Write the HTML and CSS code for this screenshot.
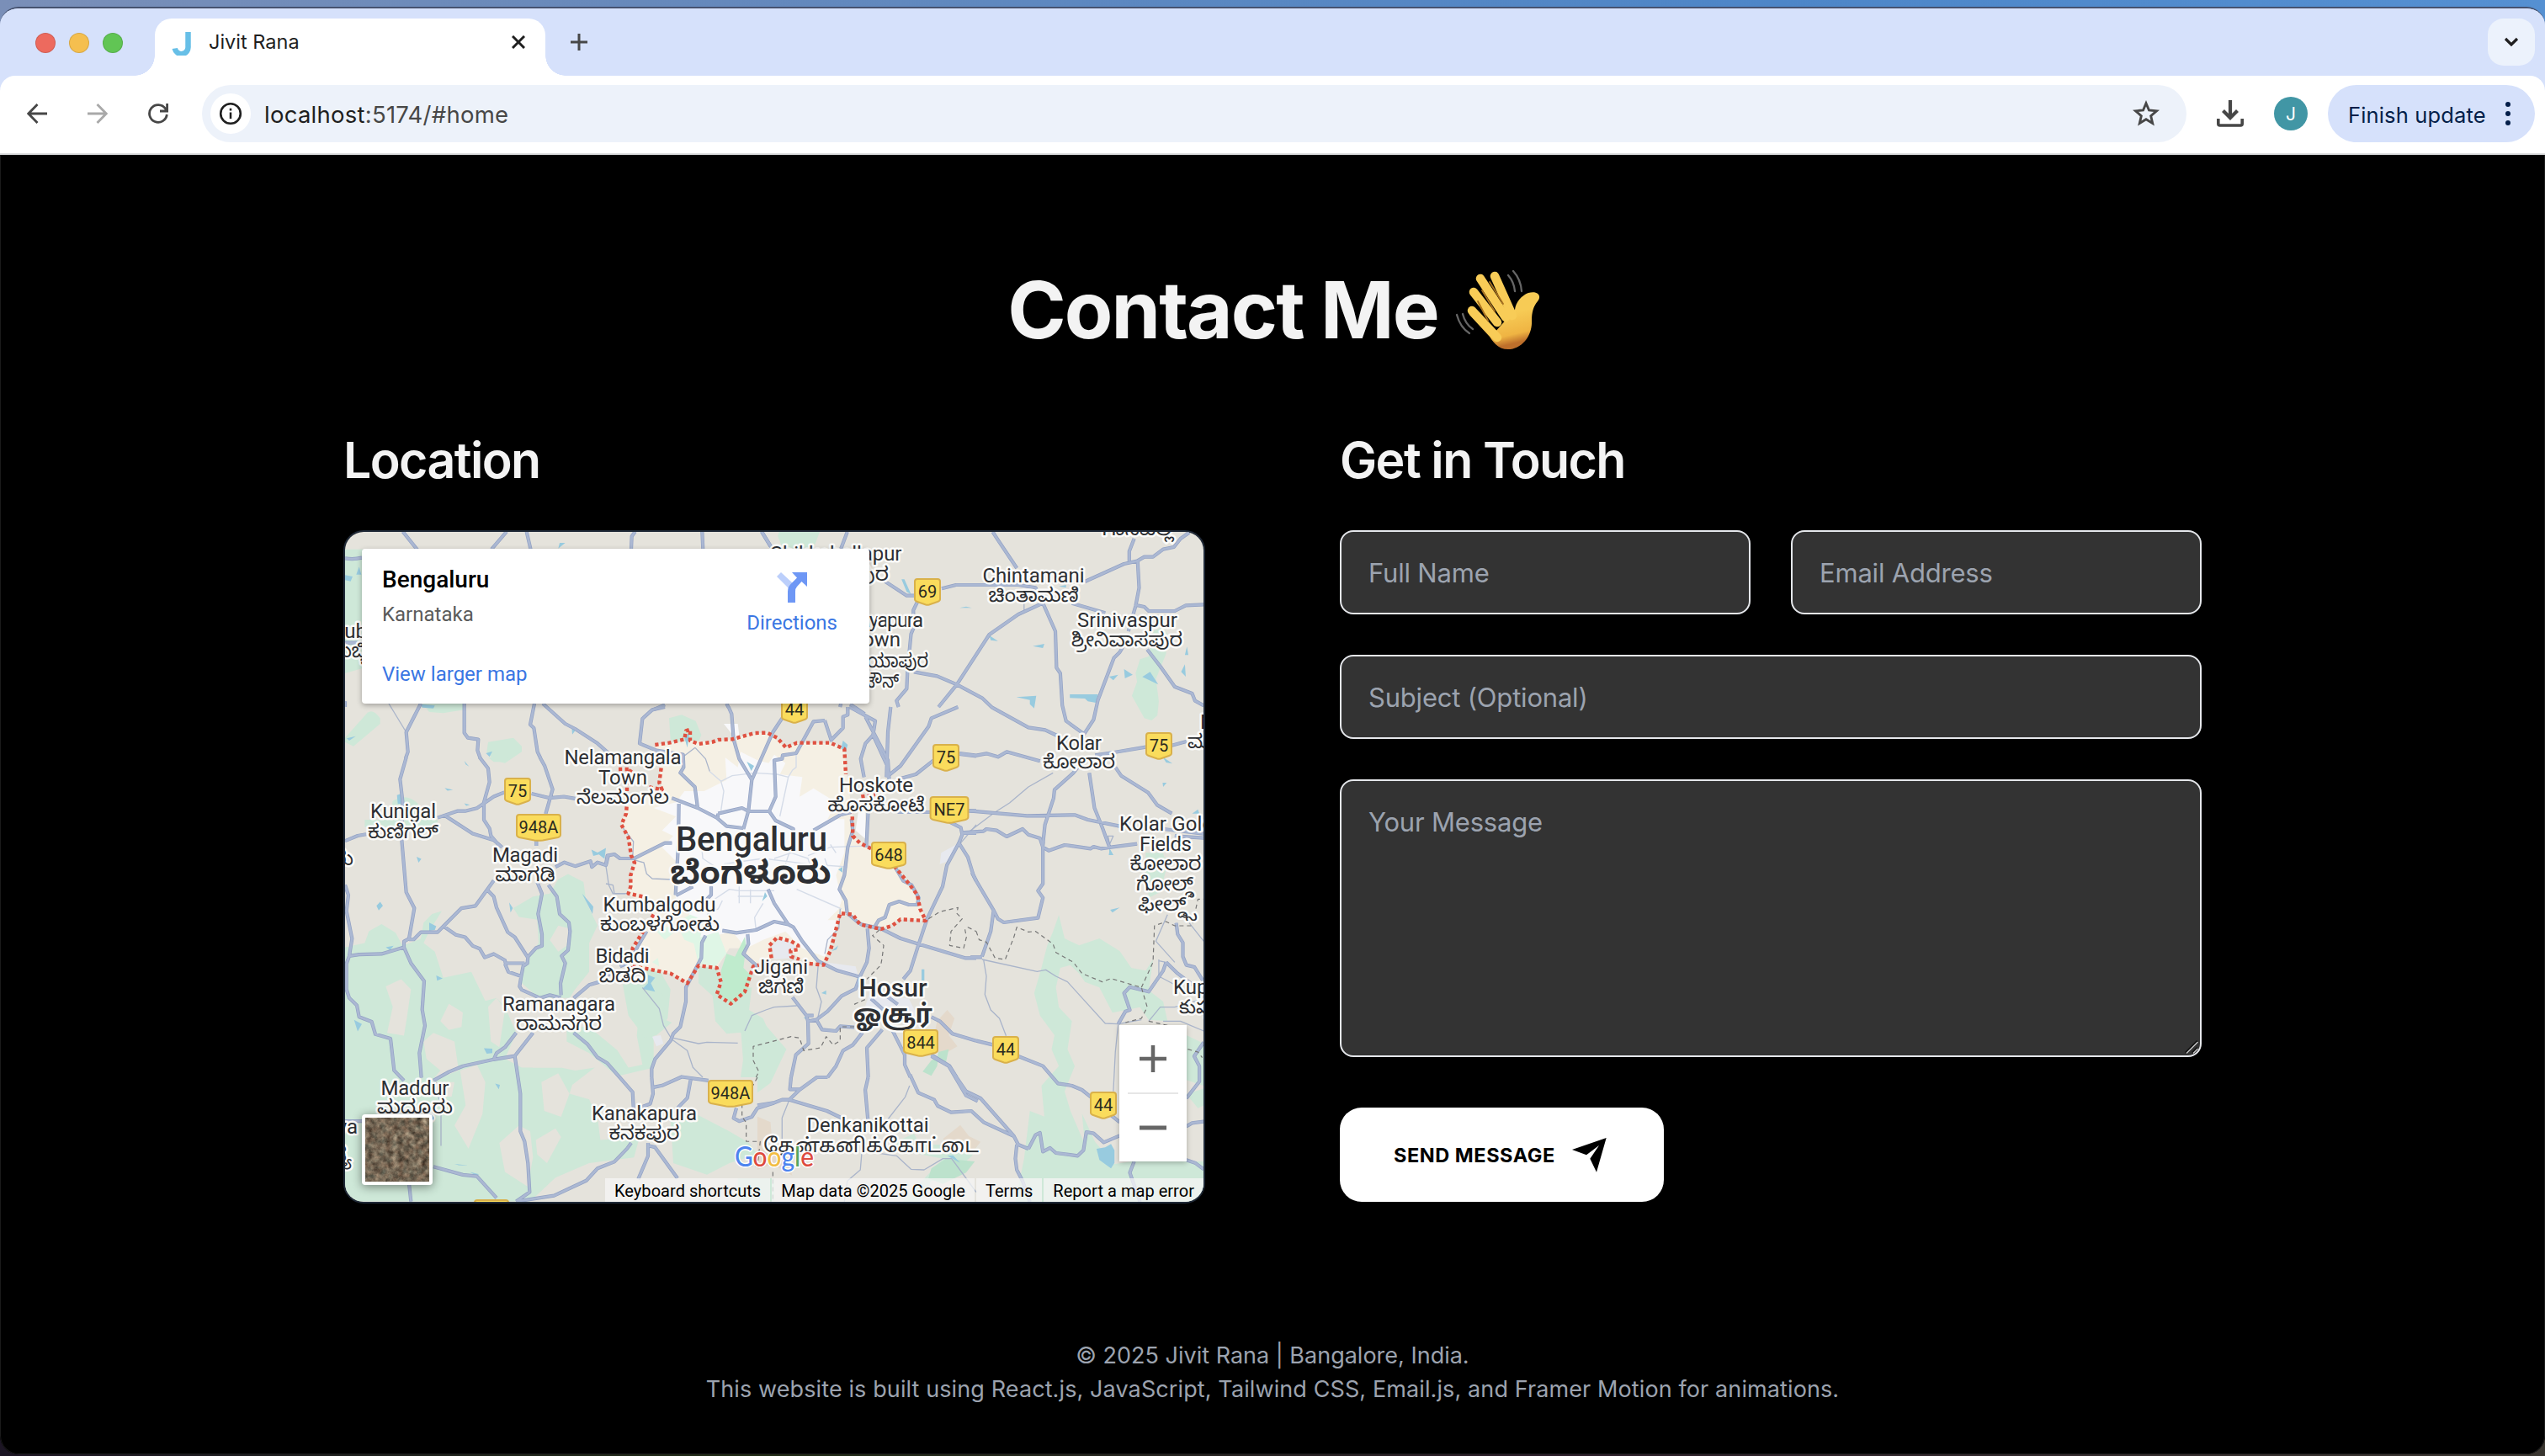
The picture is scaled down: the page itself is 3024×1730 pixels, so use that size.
FILE: index.html
```html
<!DOCTYPE html>
<html lang="en">
<head>
<meta charset="utf-8">
<title>Jivit Rana</title>
<link rel="stylesheet" href="styles.css">
</head>
<body>
<div class="window">
  <header class="tabstrip">
    <div class="lights"><i class="red"></i><i class="amber"></i><i class="lime"></i></div>
    <div class="tab">
      <svg class="favicon" width="24" height="28" viewBox="0 0 24 28"><path d="M19.500 0V17a8 8.300 0 0 1-15.800 2.500" fill="none" stroke="#67bfe7" stroke-width="6.500"/></svg>
      <span class="tab-title">Jivit Rana</span>
      <svg width="16" height="16" viewBox="0 0 16 16"><path d="M1 1L15 15M15 1L1 15" stroke="#1f1f1f" stroke-width="3"/></svg>
    </div>
    <svg class="plus" width="20" height="20" viewBox="0 0 20 20"><path d="M10 0V20M0 10H20" stroke="#474747" stroke-width="3"/></svg>
    <div class="tabsearch"><svg width="18" height="12" viewBox="0 0 18 12"><path d="M2 2L9 9L16 2" fill="none" stroke="#1f1f1f" stroke-width="3.200"/></svg></div>
  </header>
  <nav class="toolbar">
    <svg class="nav" width="24" height="24" viewBox="0 0 24 24"><path d="M24 12H2M12.500 1L1.800 12L12.500 23" fill="none" stroke="#474747" stroke-width="2.800"/></svg>
    <svg class="nav" width="24" height="24" viewBox="0 0 24 24"><path d="M0 12H22M11.500 1L22.200 12L11.500 23" fill="none" stroke="#a9a9a9" stroke-width="2.800"/></svg>
    <svg class="nav" width="24" height="24" viewBox="0 0 24 24"><path d="M22.300 13A10.400 10.400 0 1 1 20.500 6L22 8.500M22.600 0V9H14" fill="none" stroke="#474747" stroke-width="2.800"/></svg>
    <div class="omnibox">
      <span class="info"><svg width="28" height="28" viewBox="0 0 28 28"><circle cx="14" cy="14" r="11.800" fill="none" stroke="#1f1f1f" stroke-width="2.600"/><path d="M14 12.500V20M14 7.800V10.400" stroke="#1f1f1f" stroke-width="2.500"/></svg></span>
      <span class="url">localhost<em>:5174/#home</em></span>
      <svg width="32" height="32" viewBox="0 0 32 32"><path d="M16 3.800L19.500 12L28.500 12.800L21.700 18.700L23.700 27.500L16 22.800L8.300 27.500L10.300 18.700L3.500 12.800L12.500 12Z" fill="none" stroke="#474747" stroke-width="2.900"/></svg>
    </div>
    <svg class="download" width="32" height="32" viewBox="0 0 32 32"><path d="M16 0V20M7.500 12.500L16 21L24.500 12.500" fill="none" stroke="#474747" stroke-width="4.200"/><path d="M1.800 22V28Q1.800 30 3.800 30H28.200Q30.200 30 30.200 28V22" fill="none" stroke="#474747" stroke-width="3.600"/></svg>
    <span class="avatar">J</span>
    <div class="update"><span>Finish update</span><svg width="6" height="30" viewBox="0 0 6 30"><g fill="#041e49"><circle cx="3" cy="4" r="3"/><circle cx="3" cy="15" r="3"/><circle cx="3" cy="26" r="3"/></g></svg></div>
  </nav>

  <main class="page">
    <h1 class="title"><span>Contact Me</span>
      <svg class="wave" width="104" height="96" viewBox="0 0 104 96">
        <defs><linearGradient id="skin" x1="0" y1="0" x2=".3" y2="1"><stop offset=".5" stop-color="#f7cb55"/><stop offset=".85" stop-color="#efb443"/><stop offset="1" stop-color="#bd6f2b"/></linearGradient></defs>
        <path d="M20 46L47 74L71 47C72 38 79 30 87 27C99 24 103 31 98 37C93 43 91 50 91 60C92 78 79 94 63 94C52 94 46 87 41 79L17 53Q14 46 20 46Z" fill="url(#skin)"/>
        <g fill="none" stroke="#f8cc57" stroke-linecap="round" stroke-width="10.500"><path d="M20 48L50 80"/><path d="M22 26L50 62"/><path d="M30 10L60 56"/><path d="M47 7L68 54"/></g>
        <g fill="none" stroke="#a8711f" stroke-linecap="round" stroke-width="1.800"><path d="M27 37L39 60"/><path d="M32 24L47 49"/><path d="M41 14L57 40"/></g>
        <g fill="none" stroke="#666" stroke-linecap="round" stroke-width="2.300"><path d="M2 53Q6 68 17 75"/><path d="M9 52Q12 64 21 70"/><path d="M63 6Q70 14 71 25"/><path d="M69 1Q78 11 79 25"/></g>
      </svg>
    </h1>
    <div class="columns">
      <section>
        <h2>Location</h2>
        <div class="map">
          <svg class="tiles" width="1020" height="796" viewBox="410 632 1020 796">
            <defs>
              <g id="roads">
                <g transform="translate(400 500) scale(.33333)">
                  <path d="M236 395L288 460M606 395L552 458M677 395L692 460M1064 395L1052 412L1050 458M1303 395L1306 460M1515 395L1545 445L1560 460M30 490Q60 495 90 488M30 791H90M300 1008L248 1110L254 1180L246 1203M455 1008V1112L468 1130L505 1136L502 1175L512 1203M705 1008L690 1083L703 1095L716 1180L727 1203M735 1008L815 1080L850 1098L930 1150L975 1190M1170 1012L1128 1030M1390 1008L1397 1022M30 1000V1020"/>
                </g>
                <g transform="translate(900 620) scale(.34435 .33333)">
                  <path d="M812 36L830 65L895 165M1300 60L1283 105V140M1490 38L1460 60L1437 90L1400 98L1365 125H1335L1310 140L1265 150L1130 213M1312 142L1317 235L1305 300L1280 390M1308 297L1335 303L1350 318H1440L1478 298L1540 295M636 238L685 225H900L960 235L985 290M440 212L515 263H545M552 285L538 315V380L530 400L518 530L515 595L480 638L487 660M310 36L288 96M15 36L45 85M985 290L900 330L800 402L688 580L625 660M985 290L1028 390L1032 520L1045 540L1052 655L1065 710L1125 755M540 535L620 550L688 580L775 628L810 662L935 733L993 742L1040 765M1270 430L1250 465L1230 485L1175 635L1160 705L1125 760M1345 455L1390 515L1440 588L1500 612L1510 638L1540 655M1085 290L1200 325M697 825L755 833L790 826L830 838L860 820L975 853M1165 832L1230 822L1340 803M1430 797L1480 783M1125 850L1090 895L1025 955L1022 985L992 1080L985 1150M1145 895L1163 1020L1190 1090L1215 1160M1235 875L1255 905L1348 965L1380 1010L1430 1040M730 1030L930 1048L1095 1045L1140 1062L1250 1085M1400 1095L1540 1112M1440 1120L1540 1127M705 1108L780 1103L790 1095L825 1100L860 1122L915 1095L935 1115L975 1128L985 1160L1005 1172L1060 1152L1150 1165L1160 1158L1185 1165L1220 1160L1310 1148M288 648L285 660M320 650L370 685"/>
                </g>
                <g transform="translate(720 840) scale(.33333)">
                  <path d="M210 0L165 10L130 42L120 130L180 155L275 170L277 215L265 235L317 285L327 360M437 0L448 25L455 115L475 185L520 260M628 40L595 90L520 260L508 370L490 435M235 325L327 360L395 395L430 425L490 432M400 380L485 360L508 372H582L605 405L668 435V460M398 397L400 380M780 48L740 52L678 165L630 172L628 185L600 190L605 320L582 372M780 48L803 118L845 75V35L862 28V0M868 0L960 50L952 100L1005 215M925 35L1005 190L1010 260M952 100L925 130L908 185L920 250M1015 0L1005 90L1000 250M1255 0L1160 40L1150 70L1050 210L1000 250M1168 190L1105 240L1050 255M1260 168L1320 175M260 345L258 490L248 670M235 485H210L100 540H50L30 525L5 530L0 560M740 440L835 385L875 375M935 370L928 500M875 400L880 440L862 500L850 600L832 650L855 690L860 735M860 735L895 765L910 775L980 790L1050 825L1115 845L1280 895H1320M960 780L972 760L995 750L1010 705L1045 693L1080 705H1112M1268 450H1320M1225 410L1265 430L1270 455L1258 485L1215 565L1200 640L1145 755L1115 845L1085 940L1060 970M1258 485L1290 535L1310 600L1320 620M1040 375H1155M1293 370H1320M578 650L600 700L650 775L668 785L700 835L755 905L825 940L905 962M415 797L465 805L535 795L600 765L650 775M505 810L508 845L490 880L540 925M375 640V670L345 700M250 672L310 640M145 800L115 850L85 910L50 925M355 815L342 840L340 895L285 1000V1050L265 1140L240 1165L230 1190L175 1255L163 1290V1320M932 790L938 860L930 910L905 962L890 1005L840 1030L790 1085L750 1115L720 1120L715 1100L740 1100M665 1035L715 1100M720 1120L722 1200L677 1240L660 1320M750 1115L770 1150L820 1155L835 1138L885 1142M915 1160L880 1205L845 1225L820 1280L790 1320M985 1150L930 1215L935 1320M1020 1150L1065 1240V1275L1085 1320M1160 1105L1190 1120L1235 1165L1320 1190M1160 1240L1225 1280L1250 1320M945 1040L990 1080M1000 1030L1040 1060M1030 570L1060 620L1090 635L1115 680L1110 705"/>
                </g>
                <g transform="translate(900 1000) scale(.34435 .33333)">
                  <path d="M740 110L755 140L815 245L830 275L850 288L968 272L985 200L968 175L985 150V0M815 245L805 320L775 410M735 412L775 412M755 710L815 725M900 765L985 800L1037 862L1085 870L1120 885L1150 910M1220 975L1250 1000M600 765L660 800L720 890L770 915L885 1050L900 1080L935 1095M660 800L720 905L760 925M526 830L555 895L610 920L622 942L668 965L738 960L780 1000L885 1050M382 840L372 885L382 1000M242 840L205 840L145 885L110 920L85 920L60 930L0 940M116 840L112 883H145M110 920L240 960L300 990M895 1080L890 1130L895 1170L915 1210L940 1284M935 1095L960 1045L975 1038L985 1105L1010 1092L1030 1110L1105 1120L1125 1100L1135 1035L1160 1040L1195 1072L1250 1048M1480 1015L1500 1003L1540 998M1480 1135L1510 1145L1540 1168M1300 1140L1285 1180L1320 1284M1480 915L1525 855V800L1507 765L1540 715M1410 430L1400 460L1350 535L1285 518L1265 540L1285 600L1270 605L1245 650M1410 430L1450 470L1540 540M1445 290L1450 330L1468 360V410L1480 440L1508 447L1540 500"/>
                </g>
                <g transform="translate(400 900) scale(.33333 .34435)">
                  <path d="M248 0L226 75L235 150L232 285L248 465L277 520L258 625L240 635V655L265 710L312 772L305 870L315 925L295 1020L302 1105M30 288L75 270L105 265M360 208L430 185H458L500 175L560 135L598 120M385 200L485 263L560 285L590 310M510 0L540 38L545 85L525 155V215L545 245L550 270L580 305M725 0L742 30L770 110L745 195M695 125L760 140L810 135L850 142M712 285V305M780 378L812 362L850 375L905 358L910 378L930 362L960 372L968 340M560 425L495 512L445 520L380 583L360 603H300L275 628H258M535 455L560 480L570 518L610 603L635 620L680 688M385 585L425 612L458 620L485 650L510 660L528 690L560 678L600 700L602 710H670M600 712L612 740L658 755M715 430L732 470L718 540L732 610V650L710 658L682 688L680 710L665 720L658 755L652 790L660 802L725 830L760 820L800 830M755 440L785 480L795 540L828 570L832 600L825 665L802 685L815 710L798 780L800 820M30 440L42 475L35 530L55 625L45 685L35 712V800L45 830L72 855L80 895L125 912L138 955L192 970L205 1080L240 1115M45 685L80 680L160 678L240 655M345 1115L400 1085L450 1065L560 1042L635 1030M560 1042L570 1020L600 1000L640 950M700 950L635 1030L655 1160V1290L670 1325L682 1400L688 1500L640 1532M845 830L900 785L935 775L990 735M845 950L895 990L930 1035L965 1055L1055 1155L1060 1240M1123 1104L1128 1160L1118 1195L1090 1205M1130 1138L1160 1132L1230 1102L1325 1115M1262 1112L1250 1175L1215 1210M1050 1330L1035 1350L990 1395L930 1418L890 1460L775 1512L640 1532M1110 1330V1375L1075 1455M1115 1340L1135 1345L1215 1452M345 1412L450 1440L500 1445L570 1520M258 1470L265 1532M30 1255H90M1425 1210L1415 1245L1435 1255L1480 1240L1500 1210L1560 1192"/>
                </g>
              </g>
              <path id="shield-2" class="shield" d="M-12-15H12Q15-15 15-12V9Q15 11 12 12L2 15.500Q0 16-2 15.500L-12 12Q-15 11-15 9V-12Q-15-15-12-15Z"/>
              <path id="shield-3" class="shield" d="M-17-15H17Q20-15 20-12V9Q20 11 17 12L3 15.500Q0 16-3 15.500L-17 12Q-20 11-20 9V-12Q-20-15-17-15Z"/>
              <path id="shield-4" class="shield" d="M-23-15H23Q26-15 26-12V9Q26 11 23 12L5 15.500Q0 16-5 15.500L-23 12Q-26 11-26 9V-12Q-26-15-23-15Z"/>
            </defs>
            <rect x="410" y="632" width="1020" height="796" fill="#e5e3dc"/>
            <g class="green">
              <g transform="translate(400 500) scale(.33333)">
                <path d="M30 458H100V880L30 900ZM30 1130L110 1040Q130 1025 155 1060V1080L60 1160L30 1145ZM300 1000H455V1030L380 1042L330 1038ZM540 1145L630 1130L660 1160V1180L600 1220L560 1210L535 1180Z"/>
              </g>
              <g transform="translate(900 620) scale(.34435 .33333)">
                <path d="M75 36H215L195 90L130 110L85 90L70 50ZM1365 390L1400 375L1415 400L1410 470L1375 560L1385 640L1380 690L1360 708L1335 700L1292 620L1310 570L1305 540L1320 490L1350 480Z"/>
                <path d="M1340 1180L1400 1180L1410 1230L1390 1290L1340 1310Z"/>
              </g>
              <g transform="translate(400 900) scale(.33333 .34435)">
                <path d="M30 655L100 640L115 600L160 575L210 605L235 650L300 625L310 570L340 540L375 530L330 600L310 640L350 670L380 760L480 740L530 840L570 830L600 860L640 950L600 1040L660 1070L720 1070L800 1070L850 1080L920 1070L840 1130L830 1160L900 1180L930 1240L940 1320L1080 1310L1060 1380L900 1400L780 1450L690 1532H30Z"/>
                <path d="M630 520L700 480L760 470L790 420L825 402L880 430L890 500L930 580L900 640L900 740L850 800L830 830L720 830L650 770L680 690L720 640L715 560L650 550Z"/>
                <path d="M820 930L900 930L1000 1010L1040 1070L1090 1060L1070 960L1080 860L1030 830V770L1080 760L1130 700L1190 800L1180 900L1130 960V1070L1000 1100L900 1020L820 980Z"/>
                <path d="M1190 1240L1260 1220L1400 1290L1470 1330L1500 1370L1400 1400L1320 1440L1200 1400ZM1440 930L1500 910L1560 960V1080L1510 1120L1450 1060ZM200 150Q250 120 290 160L300 200L230 230L190 200ZM100 215H360V240H100ZM540 0H610L600 15H560ZM1430 1452H1560V1532H1430Z"/>
              </g>
              <g transform="translate(720 840) scale(.33333)">
                <path d="M225 40L270 28L320 50L340 100L330 125L290 160L230 115ZM330 930L350 925L400 940L420 1010L520 1000L510 1080L560 1110L590 1180L640 1220L590 1320H480L500 1180L480 1160L430 1165L390 1120L380 1030L330 985ZM60 990L140 960L215 1040L200 1110L235 1125L180 1170L140 1180L80 1100Z"/>
              </g>
              <g transform="translate(900 1000) scale(.34435 .33333)">
                <path d="M1040 262L1060 345L1110 370L1180 345L1250 390L1290 450L1340 460L1365 420L1350 530L1400 570L1415 640L1350 635L1320 590L1225 610L1180 520L1130 500L1110 470L1080 440L1045 450L1030 520L1040 590L1085 640L1070 740L1095 800L1060 890L1080 960L1130 1080L1120 970L1165 1070L1230 1150L1290 1140L1540 1140V1284H890L920 1130L940 960L990 980L980 870L1040 800L1015 740L1025 690L975 620L955 540L980 450L1000 370L1020 320Z"/>
                <path d="M0 620L100 740L45 860L0 895ZM1480 690L1540 720V870L1480 850ZM1340 40L1420 60L1390 180L1350 200ZM440 1090L540 1040L560 1080H640L680 1060L760 1080L740 1120L660 1200L600 1210L560 1284H500L640 1130ZM1480 900L1540 880V940L1520 950Z"/>
              </g>
            </g>
            <g class="land">
              <g transform="translate(400 900) scale(.33333 .34435)">
                <path d="M175 790L230 765L265 800L250 900L240 960L180 950L200 860ZM310 980L345 950L420 980L435 1080L340 1115L370 1080L320 1040ZM370 910L400 850L450 880L445 930L400 940ZM440 1080L500 1060L530 1120L520 1230L470 1350L420 1270L460 1200ZM580 1330L650 1270L690 1290L700 1380L680 1480L600 1430ZM710 1320L780 1280L800 1310L750 1400L715 1370ZM760 630L790 580L830 590L820 650L790 670ZM540 860L570 830L600 870L580 1000L550 980ZM660 950L780 950L820 1020L800 1070H700L660 1030ZM730 1120L790 1090L830 1160L800 1240L740 1220ZM330 1120L420 1120L410 1170L340 1170ZM30 650L45 640V655Z"/>
              </g>
            </g>
            <g transform="translate(720 840) scale(.33333)">
              <path fill="#f5f0e4" d="M175 135L225 128L300 120L380 125L450 115L530 93L575 92L642 145L680 128H800L850 150L860 250L878 380L880 460L945 505L1030 570L1080 630L1110 670L1140 762L1050 757L980 792L905 775L880 740L835 735L775 920L690 900L658 868L610 822L583 850L590 900L525 925L490 860L440 860L395 930L330 922L290 985L230 950L155 935L95 920L95 860L170 740L80 665L102 555L80 465L55 420L75 340L200 295L190 200Z"/>
              <path fill="#f8f8fa" d="M350 300L430 260L425 180L470 215L480 160L540 190L580 200L600 170L640 200L620 240L700 250L690 320L740 290L820 340L790 400L850 400V520L820 600L840 690L830 720L790 760L830 760L780 890L700 860L640 800L560 830L500 860L450 800L330 830L290 780L300 720L250 690L240 620L260 560L200 500L240 460L200 440L250 390L170 360L250 340L280 300ZM420 60L470 60L475 100L460 110ZM900 370H925V470L890 440Z"/>
              <path fill="#e7e9ef" d="M590 850L620 828L665 840L680 860L655 870L660 895L600 900ZM780 910L890 925L900 960L820 935ZM940 1020L1080 1040L1110 1100L1000 1140L920 1080ZM165 1175L195 1170L205 1200L180 1210ZM1250 490L1195 520L1190 560L1220 550Z"/>
              <path fill="#dff6e6" d="M180 800L230 780L300 740L350 760L330 850L280 830L260 790L210 830ZM310 830L400 800L430 880L390 925L330 915ZM165 910L185 895L190 925Z"/>
              <path fill="#bfebcd" d="M430 880L460 890L495 820L500 850L490 930L520 960L500 1020L445 1058L400 1020L415 990L410 940Z"/>
            </g>
            <g class="sand" transform="translate(900 1000) scale(.34435 .33333)"><path d="M620 640L655 600L680 630L660 690L690 730L640 760L600 740ZM640 1060L700 1010L730 1050L770 1070L740 1110L680 1090ZM0 980L45 1000L50 1060L90 1080L120 1190L50 1150L0 1170Z"/></g>
            <g fill="#bce2cc" transform="translate(900 1000) scale(.34435 .33333)"><path d="M570 820L600 780L625 765L620 800L600 835ZM625 750L660 740L650 790L620 770ZM600 1165L650 1130L750 1140L720 1180L640 1220L590 1200Z"/></g>
            <g class="water">
              <g transform="translate(400 500) scale(.33333)"><path d="M790 455L795 435L815 435ZM30 550L57 555L50 572L30 568ZM70 548L80 520L88 548ZM300 1010L350 1015L345 1025L305 1022ZM36 1132L68 1124L45 1140ZM532 1185L555 1178L545 1198ZM455 1212L472 1232L460 1225ZM838 1090L850 1105L840 1118Z"/></g>
              <g transform="translate(900 620) scale(.34435 .33333)"><path d="M497 205L507 205L530 258L515 250ZM697 307L720 302L740 307ZM800 405L830 425L805 422ZM950 443L990 435L985 450ZM893 625L962 620L955 665L940 650V635ZM1078 615H1175L1168 645L1140 640L1130 630L1078 628ZM1265 525L1295 545L1268 558ZM1328 553L1355 535L1383 580ZM1475 475L1482 445L1487 475ZM1462 535L1475 508L1478 552ZM1213 552L1245 545L1228 565ZM1398 838L1432 862L1410 858ZM1398 930H1412L1400 945ZM1500 1040L1520 1025L1525 1040ZM1215 1165L1228 1188H1213ZM1040 230L1065 225V235Z"/></g>
              <g transform="translate(720 840) scale(.33333)"><path d="M845 120L862 135L855 158L838 148ZM502 195L528 210L518 228ZM567 660L575 675L557 692ZM828 580L843 570V590ZM805 870L828 850L822 865ZM150 955L175 965L160 985L175 1015L130 1005L150 985ZM768 1020L785 1010V1025ZM280 110L298 90L290 145ZM1125 935H1135V975H1125ZM705 1108L722 1100L715 1115Z"/></g>
              <g transform="translate(900 1000) scale(.34435 .33333)"><path d="M1170 1095L1200 1090L1220 1078L1232 1100V1145L1220 1165L1180 1135ZM1217 243L1250 235L1225 253ZM655 1120L675 1118L700 1145ZM1215 25L1228 48H1213Z"/></g>
              <g transform="translate(400 900) scale(.33333 .34435)"><path d="M215 130L230 125V150L240 160L218 160ZM285 343L302 350L292 363ZM142 512L155 498L165 512L150 528ZM330 570L355 582L350 595L330 598ZM455 158L475 163L462 167ZM385 105L415 112L395 115ZM908 318L930 328L960 312L955 350L935 335L915 340ZM875 470L915 515L912 540ZM615 500L628 520L620 535ZM175 655L203 650L190 665ZM355 752L378 762L358 770ZM62 905L90 920L75 945ZM525 1003L555 1005V1020L535 1022ZM565 1125L582 1130L578 1145ZM420 1403L470 1408L435 1407ZM475 1430L508 1438L495 1442Z"/></g>
            </g>
            <g class="minor">
              <path transform="translate(720 840) scale(.33333)" d="M318 145L355 185L370 230M272 180L318 145M100 545L135 555L145 595L165 612L235 615M0 630L25 635L30 665H80M130 1000L190 1075L205 1135L235 1185L290 1225L310 1285L345 1320M240 1180L330 1200L360 1195L470 1198M495 1155L520 1100L570 1080L600 1070L680 1065M757 915L750 1000L768 1050L755 1110M780 880L790 830L830 790L835 720M60 430L98 480L95 540M1260 490L1320 420"/>
              <path transform="translate(900 620) scale(.34435 .33333)" d="M730 1105L820 1035L870 1002L935 945L1020 895M920 240V320M1210 1120H1228L1215 1150Z"/>
              <path transform="translate(900 1000) scale(.34435 .33333)" d="M775 420L965 463L995 457L1030 480L1070 500L1200 648L1245 650L1325 635M780 420L790 480L785 545L805 600L835 630L858 692M1245 650L1235 750L1228 890M1415 260L1375 355L1440 430M1350 640L1390 590L1440 590L1540 560M1385 420V480L1440 510M1385 425L1410 430M1400 640H1460L1540 675M1490 290L1540 355M525 870L510 910L450 990M110 920L85 985V1060M380 1105L480 1120L530 1168L575 1170L640 1130H670L720 1200L755 1250M360 1110L355 1170L310 1210L300 1284"/>
              <path transform="translate(400 500) scale(.33333)" d="M186 1008L248 1110"/>
              <path transform="translate(400 900) scale(.33333 .34435)" d="M372 1215V1340M355 1120L365 1180M960 375L970 440L985 470H1030"/>
            </g>
            <path class="street" transform="translate(720 840) scale(.33333)" d="M370 230L410 265L420 300L410 370M410 265L450 245L530 235L610 240L650 250L620 390M650 250L665 225L678 215V165M680 650L840 720M420 560L560 540L720 560L860 570M470 655H600M470 675H560M475 640V700M515 650V700M380 690L440 650L475 655M360 740L400 720L415 690M340 480L345 540L390 570M300 700L350 690M720 530L800 500L940 495M780 540L790 570M800 490L820 520M660 500L640 560M560 700L530 750L535 795M600 540L660 520L720 540L740 600"/>
            <use href="#roads" class="road-edge"/>
            <use href="#roads" class="road"/>
            <g class="border">
              <path transform="translate(720 840) scale(.33333)" d="M1150 755L1190 730L1255 715L1250 735L1270 755L1230 800L1225 850L1275 860L1285 820L1280 795L1290 785L1320 800M975 795L950 815L990 850L985 890L980 920L930 970M885 1060L930 1040M885 1140L835 1140V1190L810 1205L785 1175L765 1215L705 1225L690 1180L660 1175L525 1210L525 1260L545 1300L535 1320"/>
              <path transform="translate(900 1000) scale(.34435 .33333)" d="M755 320L765 350L790 358L820 415L855 420L885 340L895 305L935 322L960 320L1020 365L1030 395L1090 430L1120 470L1190 500L1220 488L1325 520L1345 590L1325 630L1270 645M1325 520L1365 430L1370 300L1410 285L1440 300H1500L1520 205H1540M1350 640L1415 655M1485 740L1520 750L1535 770"/>
              <path transform="translate(400 900) scale(.33333 .34435)" d="M1500 1104L1445 1200V1240L1460 1260V1325H1510L1500 1410L1480 1410M1555 1430V1532"/>
            </g>
            <path class="limits" transform="translate(720 840) scale(.33333)" d="M175 135L225 128L280 115L285 85L300 80V120L330 132L380 125L400 117L450 115L530 93L575 92L610 110L642 145L680 128H800L850 150L855 240M200 195L190 270L200 295L150 285M45 222L90 222L75 250V340L72 380L55 420L80 465L90 530L102 555L88 600V640L80 665L150 680M170 740L120 820L95 860V925L155 935L230 950L290 985L330 922L395 930L410 980L395 1025L445 1058L495 1015L525 925L545 920M590 895L583 850L610 822L660 835L685 850V865L658 868L660 890L690 900M725 915L775 920L800 870L835 735L880 740L905 775L980 792L1020 780L1050 757L1140 762L1120 720L1110 670L1080 630L1030 570M945 505L905 485L880 460L878 380M910 320L960 312"/>

            <g class="place">
              <text x="993" y="666" textLength="157">Chikkaballapur</text><text class="in" x="990" y="690" textLength="132" lengthAdjust="spacingAndGlyphs">ಚಿಕ್ಕಬಳ್ಳಾಪುರ</text>
              <text x="1048" y="745" textLength="98">Vijayapura</text><text x="1041" y="768" textLength="58">Town</text><text class="in" x="1050" y="793" textLength="106" lengthAdjust="spacingAndGlyphs">ವಿಜಯಾಪುರ</text><text class="in" x="1046" y="817" textLength="44" lengthAdjust="spacingAndGlyphs">ಟೌನ್</text>
              <text x="1228" y="691.700" textLength="121">Chintamani</text><text class="in" x="1228" y="715" textLength="107" lengthAdjust="spacingAndGlyphs">ಚಿಂತಾಮಣಿ</text>
              <text x="1339.400" y="744.500" textLength="119">Srinivaspur</text><text class="in" x="1339" y="768" textLength="132" lengthAdjust="spacingAndGlyphs">ಶ್ರೀನಿವಾಸಪುರ</text>
              <text class="in" x="1352" y="636" textLength="84" lengthAdjust="spacingAndGlyphs">ಗಾನಪಲ್ಲಿ</text>
              <text x="1282" y="890.500" textLength="54">Kolar</text><text class="in" x="1282" y="913" textLength="86" lengthAdjust="spacingAndGlyphs">ಕೋಲಾರ</text>
              <text x="1041" y="941" textLength="88">Hoskote</text><text class="in" x="1041" y="964" textLength="115" lengthAdjust="spacingAndGlyphs">ಹೊಸಕೋಟೆ</text>
              <text x="1386" y="987" textLength="112">Kolar Gold</text><text x="1385" y="1011" textLength="62">Fields</text><text class="in" x="1385" y="1034" textLength="85" lengthAdjust="spacingAndGlyphs">ಕೋಲಾರ</text><text class="in" x="1384" y="1058" textLength="68" lengthAdjust="spacingAndGlyphs">ಗೋಲ್ಡ್</text><text class="in" x="1386" y="1082" textLength="68" lengthAdjust="spacingAndGlyphs">ಫೀಲ್ಡ್ಸ್</text>
              <text class="in start" x="1411" y="889">ಮುಳಬಾಗಿಲು</text><text class="start" x="1426" y="866">Mulbagal</text>
              <text x="740" y="907.500" textLength="139">Nelamangala</text><text x="740" y="932" textLength="58">Town</text><text class="in" x="740" y="955" textLength="110" lengthAdjust="spacingAndGlyphs">ನೆಲಮಂಗಲ</text>
              <text x="479" y="972" textLength="78">Kunigal</text><text class="in" x="479" y="996" textLength="84" lengthAdjust="spacingAndGlyphs">ಕುಣಿಗಲ್</text>
              <text x="624" y="1023.500" textLength="78">Magadi</text><text class="in" x="624" y="1047" textLength="71" lengthAdjust="spacingAndGlyphs">ಮಾಗಡಿ</text>
              <text x="783.500" y="1082.500" textLength="134">Kumbalgodu</text><text class="in" x="784" y="1106" textLength="142" lengthAdjust="spacingAndGlyphs">ಕುಂಬಳಗೋಡು</text>
              <text x="739.500" y="1143.500" textLength="64">Bidadi</text><text class="in" x="739.500" y="1167" textLength="56" lengthAdjust="spacingAndGlyphs">ಬಿಡದಿ</text>
              <text x="664" y="1201" textLength="134">Ramanagara</text><text class="in" x="664" y="1224" textLength="102" lengthAdjust="spacingAndGlyphs">ರಾಮನಗರ</text>
              <text x="928" y="1156.500" textLength="64">Jigani</text><text class="in" x="928" y="1180" textLength="54" lengthAdjust="spacingAndGlyphs">ಜಿಗಣಿ</text>
              <text x="493" y="1300.500" textLength="81">Maddur</text><text class="in" x="493" y="1323" textLength="90" lengthAdjust="spacingAndGlyphs">ಮದ್ದೂರು</text>
              <text x="765.500" y="1331" textLength="125">Kanakapura</text><text class="in" x="765.500" y="1354" textLength="84" lengthAdjust="spacingAndGlyphs">ಕನಕಪುರ</text>
              <text x="1031" y="1345" textLength="145">Denkanikottai</text><text class="in" x="1035" y="1369" textLength="256" lengthAdjust="spacingAndGlyphs">தேன்கனிக்கோட்டை</text>
              <text class="start" x="1394" y="1181">Kuppam</text><text class="in start" x="1401" y="1204">కుప్పం</text>
              <text class="start" x="393" y="758">Gubbi</text><text class="in" x="417" y="781">ಗುಬ್ಬಿ</text><text class="end" x="425" y="1347">Mandya</text><text class="in end" x="418" y="1380">ಮಂಡ್ಯ</text><text class="in end" x="420" y="1028">ತುಮಕೂರು</text>
              <text class="city" x="893" y="1011" textLength="180">Bengaluru</text><text class="in city" x="892" y="1050" textLength="191" lengthAdjust="spacingAndGlyphs">ಬೆಂಗಳೂರು</text>
              <text class="town" x="1061" y="1184" textLength="81">Hosur</text><text class="in town" x="1061" y="1215" textLength="94" lengthAdjust="spacingAndGlyphs">ஓசூர்</text>
            </g>
            <g class="ref">
              <g transform="translate(1102 703)"><use href="#shield-2"/><text y="7">69</text></g>
              <g transform="translate(944 843)"><use href="#shield-2"/><text y="7">44</text></g>
              <g transform="translate(1124 900)"><use href="#shield-2"/><text y="7">75</text></g>
              <g transform="translate(1377 886)"><use href="#shield-2"/><text y="7">75</text></g>
              <g transform="translate(1128 962)"><use href="#shield-3" transform="scale(1.120 1)"/><text y="7">NE7</text></g>
              <g transform="translate(1056 1016)"><use href="#shield-3"/><text y="7">648</text></g>
              <g transform="translate(1094 1239)"><use href="#shield-3"/><text y="7">844</text></g>
              <g transform="translate(1195 1247)"><use href="#shield-2"/><text y="7">44</text></g>
              <g transform="translate(1311 1313)"><use href="#shield-2"/><text y="7">44</text></g>
              <g transform="translate(615 940)"><use href="#shield-2"/><text y="7">75</text></g>
              <g transform="translate(640 983)"><use href="#shield-4"/><text y="7">948A</text></g>
              <g transform="translate(868 1299)"><use href="#shield-4"/><text y="7">948A</text></g>
              <use href="#shield-3" x="584" y="1441"/>
            </g>
            <text class="logo" x="873" y="1386" textLength="94" lengthAdjust="spacingAndGlyphs"><tspan fill="#4d84ee">G</tspan><tspan fill="#dd4b3e">o</tspan><tspan fill="#f2bd42">o</tspan><tspan fill="#4d84ee">g</tspan><tspan fill="#58a55c">l</tspan><tspan fill="#dd4b3e">e</tspan></text>
          </svg>
          <div class="card">
            <div class="card-text"><strong>Bengaluru</strong><span>Karnataka</span><a>View larger map</a></div>
            <div class="directions"><svg width="36" height="36" viewBox="0 0 36 36"><path d="M0 5L5 0L19 13L14 19Z" fill="#bccffb"/><path d="M13 36V23Q13 17 17.500 13L24 6.500L18 0H36V17L29.500 11L24 17Q22 19 22 23V36Z" fill="#6e97f5"/></svg><a>Directions</a></div>
          </div>
          <svg class="satellite" width="84" height="84" viewBox="0 0 84 84"><filter id="terrain" x="0" y="0" width="1" height="1" color-interpolation-filters="sRGB"><feTurbulence type="fractalNoise" baseFrequency=".14" numOctaves="5" seed="7"/><feColorMatrix values=".6 .25 0 0 .03  .5 .32 0 0 -.01  .42 .3 0 0 -.03  0 0 0 0 1"/></filter><rect width="84" height="84" rx="4" fill="#fff"/><rect x="4" y="4" width="76" height="76" filter="url(#terrain)"/></svg>
          <div class="zoom"><svg width="32" height="32" viewBox="0 0 32 32"><path d="M16 0V32M0 16H32" stroke="#666" stroke-width="4.500"/></svg><hr><svg width="32" height="32" viewBox="0 0 32 32"><path d="M0 16H32" stroke="#666" stroke-width="5"/></svg></div>
          <div class="legal"><span>Keyboard shortcuts</span><span>Map data ©2025 Google</span><span>Terms</span><span>Report a map error</span></div>
        </div>
      </section>
      <section>
        <h2 class="touch">Get in Touch</h2>
        <form class="form">
          <div class="pair"><input placeholder="Full Name"><input placeholder="Email Address"></div>
          <input placeholder="Subject (Optional)">
          <div class="message"><textarea placeholder="Your Message"></textarea><svg width="16" height="16" viewBox="0 0 16 16"><path d="M1 15L15 1M9 15L15 9" stroke="#111" stroke-width="2.500"/><path d="M2 15.500L15.500 2M10 15.500L15.500 10" stroke="#ccc" stroke-width="1.300"/></svg></div>
          <button type="button"><span>SEND MESSAGE</span><svg width="41" height="41" viewBox="0 0 123 123"><path d="M0 42L122 0L87 122L64 74L96 27L51 61Z"/></svg></button>
        </form>
      </section>
    </div>
    <footer><p class="copy">© 2025 Jivit Rana | Bangalore, India.</p><p class="built">This website is built using React.js, JavaScript, Tailwind CSS, Email.js, and Framer Motion for animations.</p></footer>
  </main>
</div>
</body>
</html>
```
FILE: styles.css
```css
* { box-sizing: border-box; }
body {
  margin: 0;
  width: 3024px;
  height: 1730px;
  padding: 8px 0 2px;
  overflow: hidden;
  background: linear-gradient(90deg, #7a8fb8, #6789bb 25%, #4d86c8 70%, #5590d2) 0 0 / 100% 60px no-repeat, linear-gradient(90deg, #1c1524, #1f2a14 30%, #2a1c28 60%, #3a3630);
  font-family: Inter, "Liberation Sans", sans-serif;
}
h1, h2, p { margin: 0; }
svg { display: block; flex: none; }
.window { height: 1720px; border-top: 2px solid #46526f; border-radius: 22px; background: linear-gradient(#d6e1fb 0 110px, #000 110px); overflow: hidden; }

.tabstrip { height: 80px; padding: 12px 12px 0 42px; display: flex; align-items: flex-start; background: #d6e1fb; }
.lights { display: flex; gap: 16px; margin-top: 17px; width: 142px; }
.lights i { width: 24px; height: 24px; border-radius: 50%; border: 1px solid rgba(0, 0, 0, .12); }
.red { background: #ed6a5e; }
.amber { background: #f5bf4f; }
.lime { background: #61c554; }
.tab { position: relative; width: 464px; height: 68px; padding: 0 24px 12px 20px; display: flex; align-items: center; background: #fff; border-radius: 20px 20px 0 0; }
.tab::before, .tab::after { content: ""; position: absolute; bottom: 0; width: 24px; height: 24px; }
.tab::before { left: -24px; background: radial-gradient(circle at 0 0, transparent 23.500px, #fff 24px); }
.tab::after { right: -24px; background: radial-gradient(circle at 100% 0, transparent 23.500px, #fff 24px); }
.favicon { margin-top: 3px; }
.tab-title { margin: 0 auto 0 20px; padding-bottom: 1px; font-size: 23.500px; color: #1f1f1f; }
.plus { margin: 18px auto 0 30px; }
.tabsearch { width: 56px; height: 56px; border-radius: 19px; background: #ecf2fc; display: flex; align-items: center; justify-content: center; }

.toolbar { height: 94px; padding: 0 12px 2px 32px; border-bottom: 2px solid #dddfe0; display: flex; align-items: center; background: #fff; border-radius: 18px 18px 0 0; }
.nav { margin-right: 48px; }
.nav:nth-child(3) { margin-right: 40px; }
.omnibox { width: 2358px; height: 68px; padding: 0 32px 0 10px; display: flex; align-items: center; border-radius: 34px; background: #edf2fa; }
.info { width: 48px; height: 48px; border-radius: 50%; background: #fff; display: flex; align-items: center; justify-content: center; }
.url { margin: 0 auto 0 16px; padding-top: 2px; font-size: 27.500px; letter-spacing: .25px; color: #1f1f1f; }
.url em { font-style: normal; color: #474747; }
.download { margin: 0 36px; }
.avatar { width: 40px; height: 40px; border-radius: 50%; background: #4196a5; color: #fff; font-size: 21px; line-height: 41px; text-align: center; }
.update { margin-left: auto; width: 246px; height: 68px; border-radius: 34px; background: #d6e1fb; padding: 0 29px 0 24px; display: flex; align-items: center; justify-content: space-between; color: #041e49; font-size: 25.500px; letter-spacing: .15px; }
.update span { padding-top: 2px; }

.page { height: 1544px; padding: 137px 407px 0; background: #000; border: 1px solid #1b1b1b; border-top: 0; border-radius: 0 0 22px 22px; }
.title { display: flex; justify-content: center; gap: 20px; height: 94px; margin-bottom: 102px; padding-left: 6px; font-size: 94px; line-height: 94px; font-weight: 700; color: #f3f3f3; letter-spacing: -1.900px; }
.columns { display: grid; grid-template-columns: 1024px 1024px; gap: 160px; }
h2 { height: 60px; margin-bottom: 53px; font-size: 59px; line-height: 60px; font-weight: 600; color: #f3f3f3; letter-spacing: -1.600px; }
.form { display: flex; flex-direction: column; gap: 48px; }
.pair { display: grid; grid-template-columns: 1fr 1fr; gap: 48px; }
input, textarea { width: 100%; height: 100px; margin: 0; padding: 0 32px; border: 2px solid #e5e7eb; border-radius: 16px; background: #333; font: 31px/48px Inter, sans-serif; letter-spacing: -.2px; }
textarea { display: block; height: 330px; padding-top: 25px; resize: none; }
::placeholder { color: #9ca3af; opacity: 1; }
.message { position: relative; margin-bottom: 12px; }
.message svg { position: absolute; right: 4px; bottom: 4px; }
button { width: 385px; height: 112px; padding: 0 0 0 64px; border: 0; border-radius: 26px; background: #fff; display: flex; align-items: center; gap: 20px; font: 700 23.500px Inter, sans-serif; letter-spacing: .55px; color: #000; }
footer { margin-top: 161px; text-align: center; color: #9ca3af; font-size: 27px; line-height: 40px; }
.built { letter-spacing: .105px; }

.map { position: relative; height: 800px; border: 2px solid #1f2937; border-radius: 24px; overflow: hidden; font-family: Roboto, "Noto Sans", sans-serif; }
.tiles path { vector-effect: non-scaling-stroke; }
.green { fill: #cee8d8; }
.land { fill: #e5e3dc; }
.sand { fill: #e4d9cb; }
.water { fill: #98cbdf; }
.road, .road-edge, .minor, .street, .border, .limits { fill: none; stroke-linejoin: round; }
.road-edge { stroke: #93a2c4; stroke-width: 4.200px; }
.road { stroke: #abb8d3; stroke-width: 2.800px; }
.minor { stroke: #a9b4ca; stroke-width: 1.300px; }
.street { stroke: #d5dce8; stroke-width: 1.400px; }
.border { stroke: #777; stroke-width: 1.200px; stroke-dasharray: 5 4; }
.limits { stroke: #df5141; stroke-width: 4.400px; stroke-dasharray: 4.200 3.400; }
.place text { font-size: 24px; text-anchor: middle; fill: #2d2f33; stroke: #fbfbf9; stroke-width: 5px; stroke-linejoin: round; paint-order: stroke; }
.place .in { font-size: 23px; font-family: "Noto Sans Kannada", "Noto Sans Tamil", "Noto Sans", sans-serif; }
.place .start { text-anchor: start; }
.place .end { text-anchor: end; }
.place .city { font-size: 40px; font-weight: 500; }
.place .in.city { font-size: 38px; font-weight: 700; }
.place .town { font-size: 30px; font-weight: 500; }
.place .in.town { font-size: 30px; font-weight: 700; }
.shield { fill: #fadc5c; stroke: #d9b14b; stroke-width: 2px; }
.ref text { font-size: 20px; text-anchor: middle; fill: #2a2a20; }
.logo { font: 500 33px Lato, sans-serif; stroke: #fff; stroke-width: 3px; paint-order: stroke; }

.card { position: absolute; left: 20px; top: 20px; width: 603px; height: 184px; padding: 20px 38px 0 24px; display: flex; justify-content: space-between; background: #fff; border-radius: 4px; box-shadow: 0 2px 6px rgba(0, 0, 0, .3); }
.card-text { display: flex; flex-direction: column; font-size: 24px; line-height: 28px; color: #5b5b5b; }
.card-text strong { height: 44px; padding-top: 3px; font-size: 28px; font-weight: 500; line-height: 28px; color: #000; }
.card-text span { height: 71px; }
.card a { color: #3a76e3; }
.directions { display: flex; flex-direction: column; align-items: center; padding-top: 8px; gap: 10px; font-size: 24px; line-height: 28px; }
.satellite { position: absolute; left: 20px; bottom: 20px; filter: drop-shadow(0 2px 6px rgba(0, 0, 0, .45)); }
.zoom { position: absolute; right: 20px; top: 586px; width: 80px; height: 162px; display: flex; flex-direction: column; align-items: center; justify-content: space-between; padding: 24px 0; background: #fff; box-shadow: 0 2px 6px rgba(0, 0, 0, .25); }
.zoom hr { width: 60px; margin: 0; border: 0; border-top: 2px solid #e6e6e6; }
.legal { position: absolute; right: 0; bottom: 0; height: 28px; display: flex; gap: 2px; font-size: 20px; line-height: 31px; color: #000; letter-spacing: .04px; }
.legal span { padding: 0 11px; background: rgba(245, 245, 245, .75); }
```
